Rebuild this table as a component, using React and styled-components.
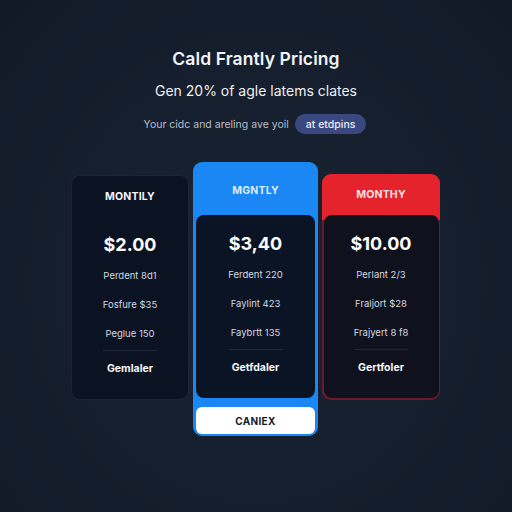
import React from "react";
import styled, { createGlobalStyle, css } from "styled-components";

const GlobalStyle = createGlobalStyle`
  html, body {
    margin: 0;
    padding: 0;
    background: #141c2a;
  }
  body {
    font-family: "Inter", "Liberation Sans", sans-serif;
  }
`;

const Page = styled.div`
  width: 512px;
  height: 512px;
  overflow: hidden;
  display: flex;
  flex-direction: column;
  align-items: center;
  padding-top: 48px;
  box-sizing: border-box;
  background: radial-gradient(
    ellipse at 50% 55%,
    #1a2334 0%,
    #161f2d 50%,
    #121a28 100%
  );
`;

const Title = styled.h1`
  margin: 0;
  color: #f2f4f8;
  font-size: 17.5px;
  line-height: 22px;
  font-weight: 600;
  letter-spacing: 0.1px;
`;

const Subtitle = styled.p`
  margin: 11px 0 0 0;
  color: #eef0f4;
  font-size: 14px;
  line-height: 20px;
  font-weight: 400;
`;

const Toggle = styled.div`
  margin-top: 13px;
  display: flex;
  align-items: center;
  gap: 6px;
  height: 20px;
  margin-right: 2px;
`;

const ToggleText = styled.span`
  color: #b6bdca;
  font-size: 10.5px;
`;

const Pill = styled.span`
  height: 20px;
  padding: 0 11px;
  display: flex;
  align-items: center;
  border-radius: 10px;
  background: #3a4880;
  color: #e8ecf8;
  font-size: 10.5px;
  font-weight: 500;
`;

const Cards = styled.div`
  margin-top: 28px;
  display: flex;
  align-items: flex-start;
  gap: 4px;
  margin-left: -1px;
`;

const variants = {
  plain: css`
    width: 118px;
    margin-top: 13px;
    background: #0b1323;
    border: 1px solid #1b2535;
    box-sizing: border-box;
  `,
  blue: css`
    width: 125px;
    padding: 0 3px 2px;
    background: #1a87f4;
    box-sizing: border-box;
  `,
  red: css`
    width: 118px;
    margin-top: 12px;
    padding: 0 1.5px 1.5px;
    background: linear-gradient(#e5232d 0, #e5232d 46px, #6a1a28 46px);
    box-sizing: border-box;
  `,
};

const Card = styled.div`
  border-radius: 9px;
  display: flex;
  flex-direction: column;
  ${(p) => variants[p.$variant]}
`;

const CardHead = styled.div`
  height: ${(p) => p.$h}px;
  padding-top: ${(p) => p.$offset || 0}px;
  box-sizing: border-box;
  display: flex;
  align-items: center;
  justify-content: center;
  color: ${(p) => p.$color};
  font-size: 10.5px;
  font-weight: 700;
  letter-spacing: 0.2px;
`;

const CardBody = styled.div`
  display: flex;
  flex-direction: column;
  align-items: center;
  padding: 18px 0 23px;
  border-radius: ${(p) => (p.$flat ? "0" : "8px")};
  background: ${(p) => p.$bg};
`;

const Price = styled.div`
  color: #ffffff;
  font-size: 18px;
  line-height: 22px;
  font-weight: 700;
`;

const Feature = styled.div`
  margin-top: ${(p) => (p.$first ? 13 : 15)}px;
  color: #d3d8e1;
  font-size: 9.5px;
  line-height: 14px;
`;

const Divider = styled.div`
  width: 54px;
  height: 1px;
  margin-top: 9px;
  background: #1e2839;
`;

const Cta = styled.div`
  margin-top: 11px;
  color: #f4f6f9;
  font-size: 10.5px;
  line-height: 14px;
  font-weight: 700;
`;

const Button = styled.div`
  margin-top: 9px;
  height: 27px;
  border-radius: 6px;
  background: #ffffff;
  display: flex;
  align-items: center;
  justify-content: center;
  color: #151b26;
  font-size: 10px;
  font-weight: 700;
  letter-spacing: 0.3px;
`;

const plans = [
  {
    variant: "plain",
    label: "MONTILY",
    labelColor: "#f4f6fa",
    headH: 40,
    bodyBg: "transparent",
    flat: true,
    price: "$2.00",
    features: ["Perdent 8d1", "Fosfure $35", "Peglue 150"],
    cta: "Gemlaler",
  },
  {
    variant: "blue",
    label: "MGNTLY",
    labelColor: "#dcedff",
    headH: 53,
    offset: 4,
    bodyBg: "#0a1424",
    price: "$3,40",
    features: ["Ferdent 220", "Faylint 423", "Faybrtt 135"],
    cta: "Getfdaler",
    button: "CANIEX",
  },
  {
    variant: "red",
    label: "MONTHY",
    labelColor: "#ffe0e2",
    headH: 41,
    bodyBg: "#0f111c",
    price: "$10.00",
    features: ["Perlant 2/3", "Fraljort $28", "Frajyert 8 f8"],
    cta: "Gertfoler",
  },
];

export default function App() {
  return (
    <>
      <GlobalStyle />
      <Page>
        <Title>Cald Frantly Pricing</Title>
        <Subtitle>Gen 20% of agle latems clates</Subtitle>
        <Toggle>
          <ToggleText>Your cidc and areling ave yoil</ToggleText>
          <Pill>at etdpins</Pill>
        </Toggle>
        <Cards>
          {plans.map((p) => (
            <Card key={p.label} $variant={p.variant}>
              <CardHead $h={p.headH} $offset={p.offset} $color={p.labelColor}>
                {p.label}
              </CardHead>
              <CardBody $bg={p.bodyBg} $flat={p.flat}>
                <Price>{p.price}</Price>
                {p.features.map((f, i) => (
                  <Feature key={f} $first={i === 0}>
                    {f}
                  </Feature>
                ))}
                <Divider />
                <Cta>{p.cta}</Cta>
              </CardBody>
              {p.button && <Button>{p.button}</Button>}
            </Card>
          ))}
        </Cards>
      </Page>
    </>
  );
}
